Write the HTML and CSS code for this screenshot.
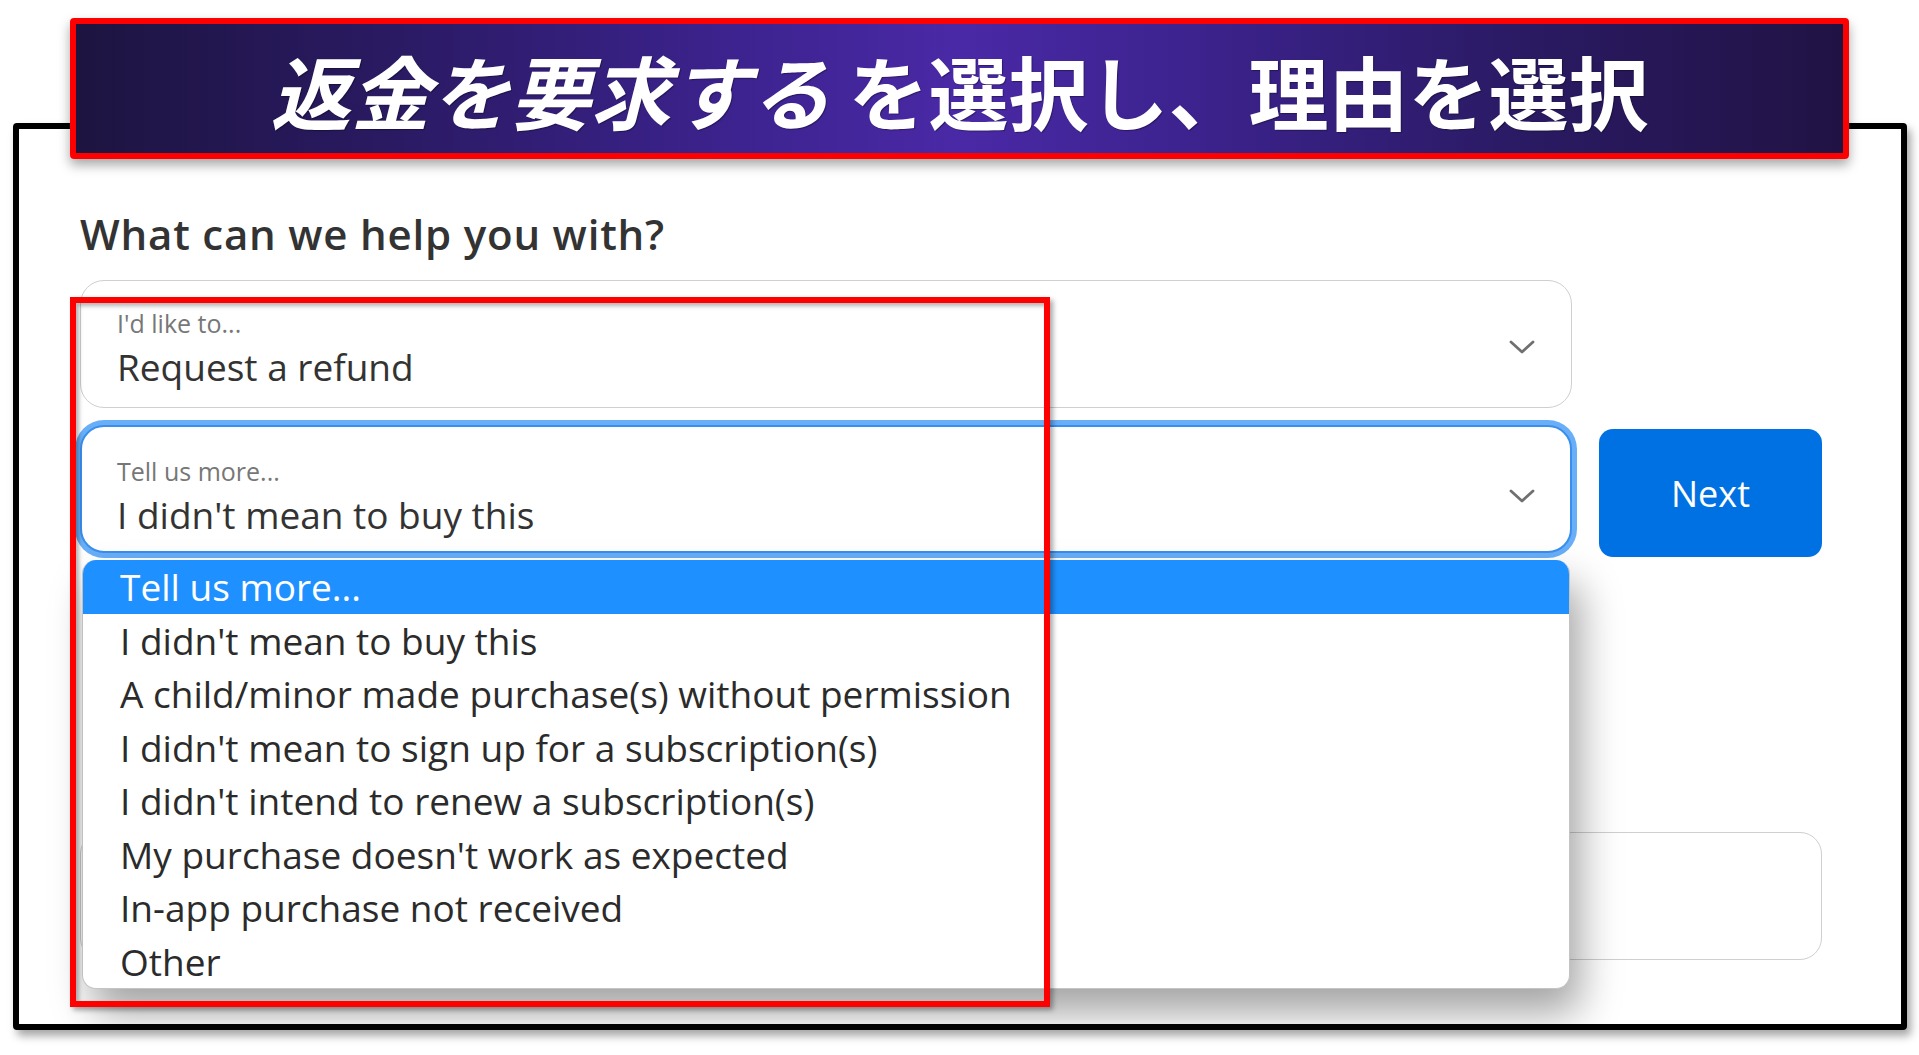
FILE: index.html
```html
<!DOCTYPE html>
<html lang="ja">
<head>
<meta charset="utf-8">
<title>Request a refund</title>
<link rel="stylesheet" href="styles.css">
</head>
<body>
<div class="banner">
  <p class="banner-text"><span class="slant">返金を要求する</span> を選択し、理由を選択</p>
</div>
<div class="frame">
  <div class="content">
    <h1 class="title">What can we help you with?</h1>
    <div class="form-grid">
      <div class="select">
        <div class="select-text">
          <div class="select-label">I'd like to...</div>
          <div class="select-value">Request a refund</div>
        </div>
        <svg class="chev" width="28" height="16" viewBox="0 0 28 16"><polyline points="3,3 14,13 25,3" fill="none" stroke="#707070" stroke-width="2.8" stroke-linecap="round" stroke-linejoin="round"/></svg>
      </div>
      <div class="spacer"></div>
      <div class="select select-focus">
        <div class="select-text">
          <div class="select-label">Tell us more...</div>
          <div class="select-value">I didn't mean to buy this</div>
        </div>
        <svg class="chev" width="28" height="16" viewBox="0 0 28 16"><polyline points="3,3 14,13 25,3" fill="none" stroke="#707070" stroke-width="2.8" stroke-linecap="round" stroke-linejoin="round"/></svg>
        <ul class="dropdown">
          <li class="opt opt-active">Tell us more...</li>
          <li class="opt">I didn't mean to buy this</li>
          <li class="opt">A child/minor made purchase(s) without permission</li>
          <li class="opt">I didn't mean to sign up for a subscription(s)</li>
          <li class="opt">I didn't intend to renew a subscription(s)</li>
          <li class="opt">My purchase doesn't work as expected</li>
          <li class="opt">In-app purchase not received</li>
          <li class="opt">Other</li>
        </ul>
      </div>
      <button class="next-btn">Next</button>
    </div>
    <div class="textarea"></div>
  </div>
  <div class="annot"></div>
</div>
</body>
</html>
```
FILE: styles.css
```css
* { box-sizing: border-box; }
html, body { margin: 0; padding: 0; background: #fff; }
body {
  width: 1919px;
  height: 1055px;
  overflow: hidden;
  padding-top: 18px;
  font-family: "Open Sans", "Noto Sans", sans-serif;
}

.banner {
  position: relative;
  z-index: 3;
  margin: 0 0 0 70px;
  width: 1779px;
  height: 141px;
  border: 6px solid #ff0000;
  border-radius: 4px;
  background: linear-gradient(90deg, #1d1440 0%, #2a1a63 18%, #3d2390 38%, #4a29a6 50%, #3d2390 62%, #2a1a63 82%, #211244 100%);
  box-shadow: 0 6px 12px rgba(0, 0, 0, 0.35);
  display: flex;
  align-items: center;
  justify-content: center;
}
.banner-text {
  margin: 0;
  color: #fff;
  font-family: "Noto Sans CJK JP", "Noto Sans CJK SC", sans-serif;
  font-weight: 700;
  font-size: 80px;
  line-height: 1;
  white-space: nowrap;
  text-shadow: 1px 1px 1px rgba(0, 0, 0, 0.35);
}
.slant { font-style: italic; }

.frame {
  position: relative;
  z-index: 1;
  margin: -36px 0 0 13px;
  width: 1894px;
  height: 907px;
  border: 6px solid #000;
  border-radius: 4px;
  background: #fff;
  overflow: hidden;
  box-shadow: 4px 6px 8px rgba(0, 0, 0, 0.35);
}

.content {
  padding: 77px 0 0 61px;
}

.title {
  margin: 0;
  font-size: 42px;
  line-height: 56px;
  font-weight: 600;
  color: #333;
  letter-spacing: 0.8px;
}

.form-grid {
  margin-top: 18px;
  display: grid;
  grid-template-columns: 1492px 223px;
  column-gap: 27px;
  row-gap: 17px;
}

.select {
  position: relative;
  height: 128px;
  border: 1px solid #cfcfcf;
  border-radius: 24px;
  background: #fff;
  display: flex;
  align-items: flex-start;
  padding: 27px 35px 0 36px;
}
.select-text { flex: 1; }
.select-label {
  font-size: 25px;
  line-height: 30px;
  color: #777;
}
.select-value {
  margin-top: 7px;
  font-size: 37px;
  line-height: 44px;
  color: #333;
}
.chev {
  margin-top: 31px;
}

.select-focus {
  border: 2px solid #3a8eee;
  box-shadow: 0 0 0 5px #68aff8;
  padding-top: 29px;
  padding-left: 35px;
  padding-right: 34px;
  z-index: 2;
}
.select-focus .chev { margin-top: 32px; }

.dropdown {
  position: absolute;
  top: 133px;
  left: 0;
  right: 0;
  margin: 0;
  padding: 0;
  list-style: none;
  background: #fff;
  border: 1px solid #c4c4c4;
  border-top: none;
  border-radius: 14px;
  overflow: hidden;
  box-shadow: 10px 24px 40px rgba(0, 0, 0, 0.36);
}
.opt {
  height: 53.5px;
  line-height: 53.5px;
  padding-left: 37px;
  font-size: 37px;
  color: #2b2b2b;
  white-space: nowrap;
}
.opt-active {
  background: #1e90ff;
  color: #fff;
}

.next-btn {
  margin-top: 4px;
  height: 128px;
  border: none;
  border-radius: 14px;
  background: #0071e3;
  color: #fff;
  font-family: "Open Sans", sans-serif;
  font-weight: 500;
  font-size: 36px;
  padding: 0;
}

.textarea {
  margin-top: 275px;
  width: 1742px;
  height: 128px;
  border: 1px solid #cfcfcf;
  border-radius: 22px;
}

.annot {
  position: absolute;
  z-index: 5;
  left: 51px;
  top: 168px;
  width: 980px;
  height: 710px;
  border: 6px solid #ff0000;
  box-shadow: 3px 3px 5px rgba(0, 0, 0, 0.35), inset 3px 3px 4px rgba(0, 0, 0, 0.3);
}
```
